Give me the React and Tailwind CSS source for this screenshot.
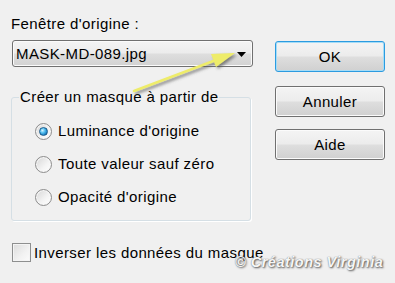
// Masque depuis image - boîte de dialogue
function Radio({ checked }) {
  return (
    <span className="relative flex h-[17px] w-[17px] shrink-0 items-center justify-center rounded-full border border-[#8c8c8c] bg-[linear-gradient(135deg,#d6d6d6,#f4f4f4_60%,#ffffff)] shadow-[inset_0_0_0_1px_#f6f6f6]">
      {checked && (
        <span className="h-[9px] w-[9px] rounded-full border border-[#1c5c8c] bg-[radial-gradient(circle_at_35%_35%,#d8f4ff_0%,#5cc4f2_35%,#1f86c8_70%,#12507e_100%)]"></span>
      )}
    </span>
  )
}

function Btn({ label, primary }) {
  return (
    <button
      className={'flex h-[31px] w-[110px] items-center justify-center rounded-[3px] border bg-[linear-gradient(#f4f4f4,#ececec_48%,#dedede_52%,#d0d0d0)] ' +
        (primary
          ? 'border-[#2b9be0] shadow-[inset_0_0_0_1px_#a6dcf6]'
          : 'border-[#707070] shadow-[inset_0_0_0_1px_#fbfbfb]')}
    >
      {label}
    </button>
  )
}

export default function App() {
  var options = [
    { label: 'Luminance d\'origine', checked: true },
    { label: 'Toute valeur sauf zéro', checked: false },
    { label: 'Opacité d\'origine', checked: false },
  ]

  return (
    <div className="relative h-[283px] w-[395px] overflow-hidden bg-[#f0f0f0] font-['Liberation_Sans',Arial,sans-serif] text-[15px] leading-[18px] tracking-[0.4px] text-black">
      <div className="flex items-start pl-[11px]">
        <div className="w-[242px] pt-[15px]">
          <div>Fenêtre d'origine :</div>

          <div className="ml-[1px] mt-[7px] flex h-[27px] w-[241px] items-center justify-between rounded-[3px] border border-[#707070] bg-[linear-gradient(#f4f4f4,#ececec_48%,#dedede_52%,#d2d2d2)] pl-[3px] pr-[6px] pt-[1px] shadow-[inset_0_0_0_1px_#fbfbfb]">
            <span>MASK-MD-089.jpg</span>
            <svg width="9" height="5" viewBox="0 0 9 5">
              <polygon points="0,0 9,0 4.5,5" fill="#000" />
            </svg>
          </div>

          <div className="mt-[30px] w-[240px] rounded-[3px] border border-[#d5dfe5] pb-[14px] shadow-[1px_1px_0_#ffffff]">
            <div className="-mt-[10px] ml-[7px] w-fit bg-[#f0f0f0] px-[1px]">Créer un masque à partir de</div>
            <div className="flex flex-col gap-[15px] pl-[23px] pt-[16px]">
              {options.map(function (o) {
                return (
                  <div key={o.label} className="flex h-[18px] items-center gap-[6px]">
                    <Radio checked={o.checked} />
                    <span>{o.label}</span>
                  </div>
                )
              })}
            </div>
          </div>

          <div className="ml-[1px] mt-[22px] flex h-[19px] items-center gap-[3px] whitespace-nowrap">
            <span className="h-[19px] w-[19px] shrink-0 border border-[#8e8f8f] bg-[linear-gradient(135deg,#dcdcdc,#f2f2f2_60%,#fbfbfb)] shadow-[inset_0_0_0_1px_#f4f4f4]"></span>
            <span>Inverser les données du masque</span>
          </div>
        </div>

        <div className="ml-[22px] flex w-[110px] flex-col pt-[41px]">
          <Btn label="OK" primary />
          <div className="mt-[14px]"><Btn label="Annuler" /></div>
          <div className="mt-[12px]"><Btn label="Aide" /></div>
        </div>
      </div>

      {/* flèche jaune */}
      <svg className="pointer-events-none absolute left-0 top-0" width="395" height="283" viewBox="0 0 395 283">
        <defs>
          <filter id="sh" x="-20%" y="-20%" width="140%" height="140%">
            <feDropShadow dx="2" dy="2" stdDeviation="1.5" floodColor="#555" floodOpacity="0.7" />
          </filter>
        </defs>
        <g filter="url(#sh)">
          <line x1="134" y1="91" x2="216" y2="60" stroke="#eeec6a" strokeWidth="2.5" strokeLinecap="round" />
          <polygon points="235,53 216,67 211,54" fill="#eeec6a" />
        </g>
      </svg>

      <div className="absolute left-[235px] top-[254px] whitespace-nowrap text-[14.5px] font-bold italic leading-[17px] tracking-[0.5px] text-[#f6f6f6] [text-shadow:1px_1px_2px_#555,0_0_1px_#777]">
        © Créations Virginia
      </div>
    </div>
  )
}
